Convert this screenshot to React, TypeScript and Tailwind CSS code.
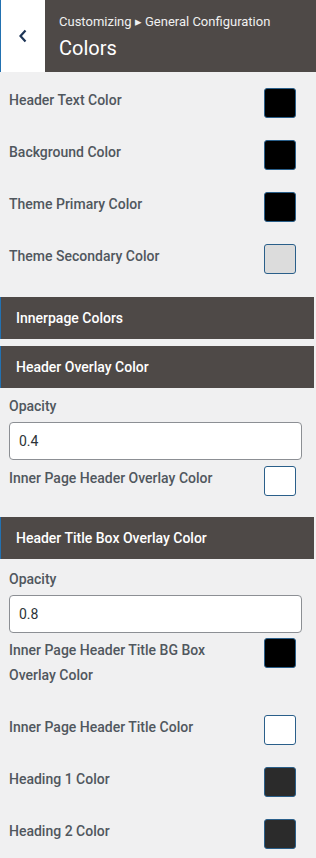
import React from "react";

type Row = { label: string; color: string };

const topRows: Row[] = [
  { label: "Header Text Color", color: "bg-black" },
  { label: "Background Color", color: "bg-black" },
  { label: "Theme Primary Color", color: "bg-black" },
  { label: "Theme Secondary Color", color: "bg-[#dcdcdc]" },
];

function Swatch({ color }: { color: string }) {
  return (
    <div className={`w-[32px] h-[30px] shrink-0 mr-[6px] rounded-[3px] border border-[#2a5f8a] ${color}`} />
  );
}

function ColorRow({ label, color }: Row) {
  return (
    <div className="flex items-center justify-between h-[30px]">
      <span className="pb-[5px] text-[14px] font-medium text-[#50575e]">{label}</span>
      <Swatch color={color} />
    </div>
  );
}

function Band({ title }: { title: string }) {
  return (
    <div className="mr-[2px] h-[42px] flex items-center pl-[15px] bg-[#4e4947] border-l border-[#2271b1] text-white text-[14px] font-medium">
      {title}
    </div>
  );
}

function Opacity({ value }: { value: string }) {
  return (
    <div className="pl-[9px] pr-[14px]">
      <div className="h-[20px] flex items-center text-[14px] font-medium text-[#50575e]">Opacity</div>
      <div className="mt-[6px] h-[38px] flex items-center px-[9px] bg-white border border-[#8c8f94] rounded-[4px] text-[14px] text-[#2c3338]">
        {value}
      </div>
    </div>
  );
}

export default function App() {
  return (
    <div className="w-[316px] min-h-[858px] bg-[#f0f0f1]" style={{ fontFamily: "Roboto, 'Liberation Sans', sans-serif" }}>
      {/* Header */}
      <div className="flex h-[72px]">
        <div className="w-[45px] bg-white border-l border-[#2271b1] flex items-center justify-center">
          <svg width="10" height="14" viewBox="0 0 10 14" fill="none">
            <path d="M7.5 1.5 2.5 7l5 5.5" stroke="#1d3557" strokeWidth="2.2" />
          </svg>
        </div>
        <div className="flex-1 bg-[#4e4947] pl-[14px] pt-[13px]">
          <div className="text-[13px] leading-[18px] text-[#f0f0f0]">Customizing ▸ General Configuration</div>
          <div className="mt-[4px] text-[20px] leading-[26px] text-white">Colors</div>
        </div>
      </div>

      {/* Top colors */}
      <div className="pl-[9px] pr-[14px] pt-[16px] flex flex-col gap-[22px]">
        {topRows.map((r) => (
          <ColorRow key={r.label} {...r} />
        ))}
      </div>

      <div className="mt-[23px]">
        <Band title="Innerpage Colors" />
      </div>
      <div className="mt-[7px]">
        <Band title="Header Overlay Color" />
      </div>

      <div className="mt-[8px]">
        <Opacity value="0.4" />
      </div>
      <div className="pl-[9px] pr-[14px] mt-[6px]">
        <ColorRow label="Inner Page Header Overlay Color" color="bg-white" />
      </div>

      <div className="mt-[21px]">
        <Band title="Header Title Box Overlay Color" />
      </div>
      <div className="mt-[10px]">
        <Opacity value="0.8" />
      </div>

      <div className="pl-[9px] pr-[14px] mt-[5px] flex items-start justify-between">
        <span className="text-[14px] leading-[25px] font-medium text-[#50575e] w-[210px]">
          Inner Page Header Title BG Box Overlay Color
        </span>
        <Swatch color="bg-black" />
      </div>

      <div className="pl-[9px] pr-[14px] mt-[27px] flex flex-col gap-[22px] pb-[10px]">
        <ColorRow label="Inner Page Header Title Color" color="bg-white" />
        <ColorRow label="Heading 1 Color" color="bg-[#2b2b2b]" />
        <ColorRow label="Heading 2 Color" color="bg-[#2b2b2b]" />
      </div>
    </div>
  );
}
